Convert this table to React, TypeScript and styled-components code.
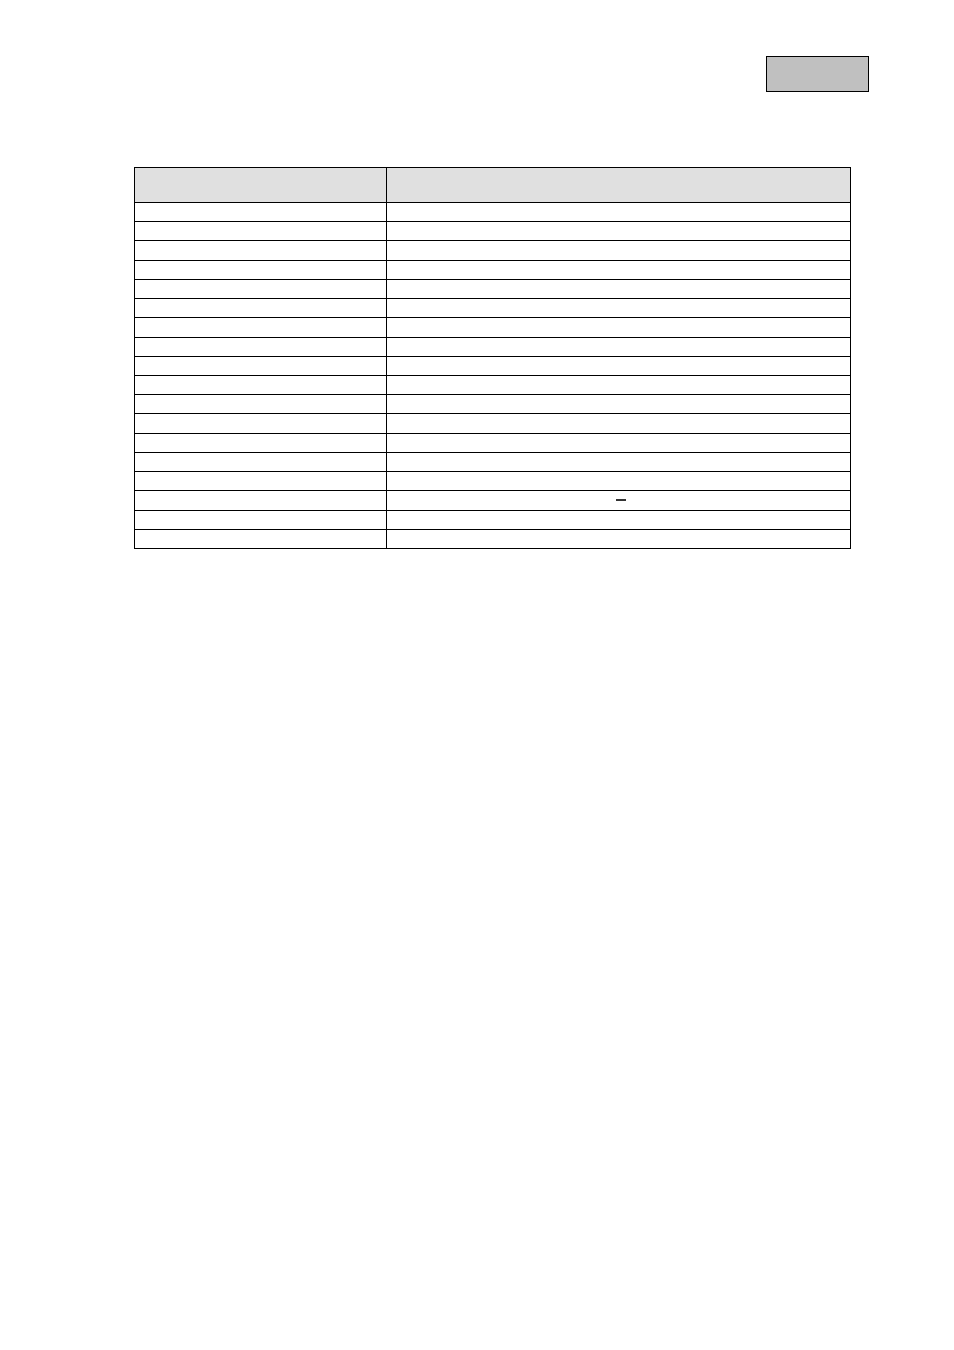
import React from "react";
import styled, { createGlobalStyle } from "styled-components";

const Global = createGlobalStyle`
  html, body { margin: 0; padding: 0; background: #ffffff; }
  body { font-family: "Liberation Sans", Arial, sans-serif; color: #000; }
`;

const Page = styled.div`
  width: 954px;
  min-height: 1350px;
  box-sizing: border-box;
  padding-top: 56px;
  display: flex;
  flex-direction: column;
`;

const TopBar = styled.div`
  display: flex;
  justify-content: flex-end;
  padding-right: 85px;
`;

const Badge = styled.div`
  width: 103px;
  height: 36px;
  box-sizing: border-box;
  border: 1px solid #000;
  background: #c0c0c0;
`;

const Grid = styled.div`
  margin-top: 75px;
  margin-left: 134px;
  width: 717px;
  box-sizing: border-box;
  display: grid;
  grid-template-columns: 252px 1fr;
  grid-template-rows: 35px repeat(18, 19.22px);
  border-top: 1px solid #000;
  border-left: 1px solid #000;
`;

const Cell = styled.div<{ $head?: boolean }>`
  box-sizing: border-box;
  border-right: 1px solid #000;
  border-bottom: 1px solid #000;
  background: ${(p) => (p.$head ? "#e0e0e0" : "#ffffff")};
  display: flex;
  align-items: center;
  justify-content: center;
  font-size: 12px;
`;

const Dash = styled.span`
  display: block;
  width: 10px;
  height: 2px;
  margin-left: 4px;
  background: #333;
`;

export default function App() {
  const rows = Array.from({ length: 18 }, (_, i) => i);
  return (
    <>
      <Global />
      <Page>
        <TopBar>
          <Badge />
        </TopBar>
        <Grid>
          <Cell $head />
          <Cell $head />
          {rows.map((i) => (
            <React.Fragment key={i}>
              <Cell />
              <Cell>{i === 15 ? <Dash /> : null}</Cell>
            </React.Fragment>
          ))}
        </Grid>
      </Page>
    </>
  );
}
